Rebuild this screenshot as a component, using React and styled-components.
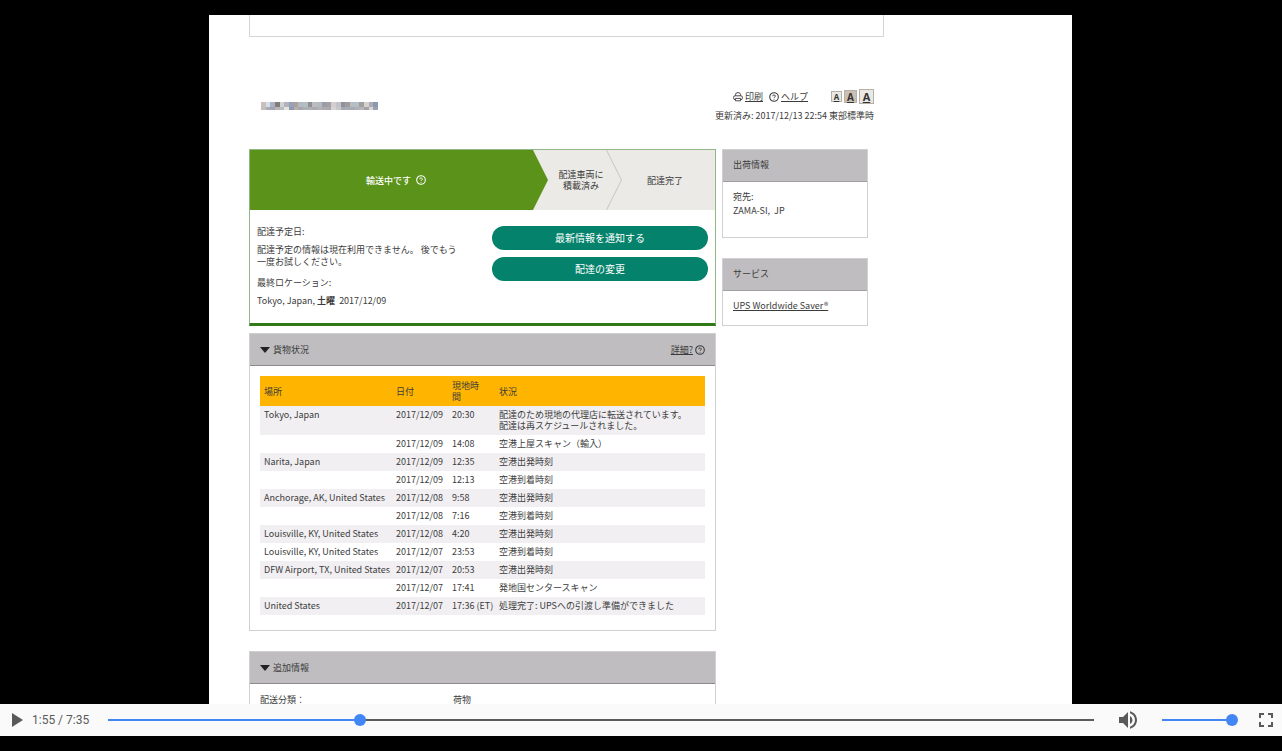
import React, { useState } from 'react';
import styled, { createGlobalStyle } from 'styled-components';
import { MdPlayArrow, MdVolumeUp, MdFullscreen } from 'react-icons/md';

const scans = [
    { place: 'Tokyo, Japan', date: '2017/12/09', time: '20:30', status: ['配達のため現地の代理店に転送されています。', '配達は再スケジュールされました。'] },
    { place: '', date: '2017/12/09', time: '14:08', status: ['空港上屋スキャン（輸入）'] },
    { place: 'Narita, Japan', date: '2017/12/09', time: '12:35', status: ['空港出発時刻'] },
    { place: '', date: '2017/12/09', time: '12:13', status: ['空港到着時刻'] },
    { place: 'Anchorage, AK, United States', date: '2017/12/08', time: '9:58', status: ['空港出発時刻'] },
    { place: '', date: '2017/12/08', time: '7:16', status: ['空港到着時刻'] },
    { place: 'Louisville, KY, United States', date: '2017/12/08', time: '4:20', status: ['空港出発時刻'] },
    { place: 'Louisville, KY, United States', date: '2017/12/07', time: '23:53', status: ['空港到着時刻'] },
    { place: 'DFW Airport, TX, United States', date: '2017/12/07', time: '20:53', status: ['空港出発時刻'] },
    { place: '', date: '2017/12/07', time: '17:41', status: ['発地国センタースキャン'] },
    { place: 'United States', date: '2017/12/07', time: '17:36 (ET)', status: ['処理完了: UPSへの引渡し準備ができました'] },
];

const mosaicTop = ['#c9c1bd', '#d3e0ea', '#a9b3c2', '#857b78', '#cdd2d4', '#b4b2b6', '#98a2b6', '#aaa19f', '#b3bac2', '#b6bec5', '#938f90', '#b9bdc2', '#b4bac0', '#9a9ca6', '#a4a2a6', '#d3cfd0', '#c4c4c8', '#8e929f', '#a39b98', '#b6bec4', '#b4c0c9', '#a29f9f', '#d5d1cd', '#a9adb5', '#8d98ad'];
const mosaicBottom = ['#c6beba', '#a9acb5', '#a3a6b2', '#b8b6b8', '#b5bcc2', '#e6e4e1', '#8f9ab2', '#b9aea9', '#a8a6ad', '#aab0b6', '#aeb0b4', '#a9abb0', '#b3b1b2', '#acacb2', '#aba9aa', '#d8d4d4', '#c9c7c8', '#a7a9b1', '#a7adb8', '#a9abb0', '#adb1b7', '#b4b6ba', '#a6a2a4', '#d9d7d5', '#98a3b5'];

const Mosaic = () => (
    <svg width="117" height="8" viewBox="0 0 25 8" preserveAspectRatio="none" shapeRendering="crispEdges">
        {mosaicTop.map((color, i) => <rect key={i} x={i} y="0" width="1" height="5" fill={color} />)}
        {mosaicBottom.map((color, i) => <rect key={i} x={i} y="5" width="1" height="3" fill={color} />)}
    </svg>
);

const Help = () => (
    <svg width="10" height="10" viewBox="0 0 10 10" fill="none" stroke="currentColor">
        <circle cx="5" cy="5" r="4.3" strokeWidth="1.1" />
        <path d="M3.7 4.2a1.3 1.2 0 1 1 1.9 1c-.4.2-.6.4-.6.8" strokeWidth="1" />
        <circle cx="5" cy="7.3" r=".5" fill="currentColor" stroke="none" />
    </svg>
);

const Printer = () => (
    <svg width="10" height="10" viewBox="0 0 10 10" fill="none" stroke="currentColor" strokeWidth="0.9">
        <path d="M2.6 3.8V2.2Q2.6.6 5 .6T7.4 2.2v1.6" />
        <rect x=".6" y="3.8" width="8.8" height="3.8" rx="1.4" />
        <path d="M2.4 6.4h5.2v2.4H2.4z" fill="#fff" />
    </svg>
);

const Arrow = () => (
    <svg width="10" height="6" viewBox="0 0 10 6">
        <path d="M0 0h10L5 6z" fill="#222" />
    </svg>
);

const App = () => {
    const [position, setPosition] = useState(116);
    const [volume, setVolume] = useState(100);

    return (
        <Screen>
            <GlobalStyle />
            <Page>
                <UpperBox />
                <TopBar>
                    <Mosaic />
                    <Tools>
                        <ToolLine>
                            <ToolLink href="#print"><Printer /><u>印刷</u></ToolLink>
                            <ToolLink href="#help"><Help /><u>ヘルプ</u></ToolLink>
                            <Sizes>
                                <SizeButton type="button" $size={11} $text={8}>A</SizeButton>
                                <SizeButton type="button" $size={13} $text={10} $active>A</SizeButton>
                                <SizeButton type="button" $size={15} $text={11}>A</SizeButton>
                            </Sizes>
                        </ToolLine>
                        <div>更新済み: 2017/12/13 22:54 東部標準時</div>
                    </Tools>
                </TopBar>
                <Columns>
                    <Main>
                        <StatusCard>
                            <Tracker>
                                <CurrentStep>輸送中です <Help /></CurrentStep>
                                <MiddleStep>配達車両に<br />積載済み</MiddleStep>
                                <Divider viewBox="0 0 16 60">
                                    <path d="M.5 0l15 30l-15 30" fill="none" stroke="#c6c5c2" />
                                </Divider>
                                <LastStep>配達完了</LastStep>
                            </Tracker>
                            <StatusBody>
                                <Delivery>
                                    <p>配達予定日:</p>
                                    <p>配達予定の情報は現在利用できません。 後でもう一度お試しください。</p>
                                    <LastPlace>最終ロケーション:</LastPlace>
                                    <p>Tokyo, Japan, <b>土曜</b>&nbsp; 2017/12/09</p>
                                </Delivery>
                                <Actions>
                                    <ActionButton type="button">最新情報を通知する</ActionButton>
                                    <ActionButton type="button">配達の変更</ActionButton>
                                </Actions>
                            </StatusBody>
                        </StatusCard>
                        <Panel>
                            <PanelHeader>
                                <PanelTitle><Arrow />貨物状況</PanelTitle>
                                <DetailLink href="#details"><u>詳細?</u><Help /></DetailLink>
                            </PanelHeader>
                            <PanelBody>
                                <ScanTable>
                                    <colgroup>
                                        <col width="132" />
                                        <col width="56" />
                                        <col width="47" />
                                        <col />
                                    </colgroup>
                                    <thead>
                                        <tr>
                                            <th>場所</th>
                                            <th>日付</th>
                                            <th>現地時<br />間</th>
                                            <th>状況</th>
                                        </tr>
                                    </thead>
                                    <tbody>
                                        {scans.map((scan, index) => (
                                            <tr key={index}>
                                                <td>{scan.place}</td>
                                                <td>{scan.date}</td>
                                                <td>{scan.time}</td>
                                                <td>{scan.status.map((line) => <div key={line}>{line}</div>)}</td>
                                            </tr>
                                        ))}
                                    </tbody>
                                </ScanTable>
                            </PanelBody>
                        </Panel>
                        <ExtraPanel>
                            <PanelHeader>
                                <PanelTitle><Arrow />追加情報</PanelTitle>
                            </PanelHeader>
                            <ExtraBody>
                                <dt>配送分類：</dt>
                                <dd>荷物</dd>
                            </ExtraBody>
                        </ExtraPanel>
                    </Main>
                    <Side>
                        <Panel>
                            <SideHeader>出荷情報</SideHeader>
                            <SideBody $bottom={19}>宛先:<br />ZAMA-SI,&nbsp; JP</SideBody>
                        </Panel>
                        <Panel>
                            <SideHeader>サービス</SideHeader>
                            <SideBody $bottom={12}><a href="#saver">UPS Worldwide Saver®</a></SideBody>
                        </Panel>
                    </Side>
                </Columns>
            </Page>
            <Controls>
                <IconButton type="button" aria-label="再生"><MdPlayArrow /></IconButton>
                <Time>1:55 / 7:35</Time>
                <Seek
                    type="range" aria-label="再生位置" min="0" max="455" value={position}
                    onChange={(e) => setPosition(Number(e.target.value))}
                    style={{ '--filled': `${(position / 455) * 100}%` }}
                />
                <IconButton type="button" aria-label="ミュート"><MdVolumeUp /></IconButton>
                <Volume
                    type="range" aria-label="音量" min="0" max="100" value={volume}
                    onChange={(e) => setVolume(Number(e.target.value))}
                    style={{ '--filled': `${volume}%` }}
                />
                <IconButton type="button" aria-label="全画面"><MdFullscreen /></IconButton>
            </Controls>
        </Screen>
    );
};

export default App;

const GlobalStyle = createGlobalStyle`
    * {
        box-sizing: border-box;
    }
    body {
        margin: 0;
        background: #000;
    }
    p, dl, dd {
        margin: 0;
    }
    button, input {
        font: inherit;
        margin: 0;
        padding: 0;
        border: 0;
    }
    svg {
        flex: none;
    }
`

const Screen = styled.div`
    display: flex;
    flex-direction: column;
    height: 100vh;
    padding: 15px 0;
    background: #000;
    color: #3c3c3c;
    font: 9px/12px "Noto Sans CJK JP", sans-serif;
`

const Page = styled.main`
    flex: 1;
    min-height: 0;
    overflow: hidden;
    margin: 0 210px 0 209px;
    padding: 0 188px 0 40px;
    background: #fff;
`

const UpperBox = styled.div`
    height: 22px;
    border: 1px solid #d5d5d5;
    border-top: 0;
`

const TopBar = styled.header`
    display: flex;
    justify-content: space-between;
    align-items: center;
    margin: 52px 10px 27px 12px;
`

const Tools = styled.div`
    text-align: right;
`

const ToolLine = styled.div`
    display: flex;
    justify-content: flex-end;
    align-items: center;
    gap: 6px;
    height: 15px;
    margin-bottom: 6px;
`

const ToolLink = styled.a`
    display: flex;
    align-items: center;
    gap: 2px;
    color: inherit;
    text-decoration: none;
`

const Sizes = styled.div`
    display: flex;
    align-items: center;
    gap: 2px;
    margin-left: 17px;
`

const SizeButton = styled.button`
    width: ${(props) => props.$size}px;
    height: ${(props) => props.$size}px;
    border: 1px solid #b5b0aa;
    background: ${(props) => (props.$active ? '#cdc0b3' : '#ebe8e3')};
    color: #333;
    font: bold ${(props) => props.$text}px/1 "Open Sans", sans-serif;
    text-decoration: underline;
`

const Columns = styled.div`
    display: flex;
    align-items: flex-start;
    gap: 6px;
    margin-right: 16px;
`

const Main = styled.div`
    flex: 1;
    min-width: 0;
`

const Side = styled.aside`
    display: flex;
    flex-direction: column;
    gap: 20px;
    width: 146px;
`

const StatusCard = styled.section`
    margin-bottom: 7px;
    border: 1px solid #8fb886;
    border-bottom: 3px solid #317a17;
`

const Tracker = styled.div`
    display: flex;
    height: 60px;
    background: #ebeae6;
    line-height: 11px;
`

const CurrentStep = styled.div`
    flex: 1;
    display: flex;
    align-items: center;
    justify-content: center;
    gap: 5px;
    padding-right: 6px;
    background: #5a921a;
    color: #fff;
    font-weight: 500;
    clip-path: polygon(0 0, calc(100% - 15px) 0, 100% 50%, calc(100% - 15px) 100%, 0 100%);
`

const Step = styled.div`
    display: flex;
    align-items: center;
    justify-content: center;
    text-align: center;
`

const MiddleStep = styled(Step)`
    width: 58px;
    padding-left: 8px;
`

const LastStep = styled(Step)`
    width: 93px;
    padding-right: 7px;
`

const Divider = styled.svg`
    width: 16px;
    height: 60px;
`

const StatusBody = styled.div`
    display: flex;
    justify-content: space-between;
    padding: 16px 7px 16px 7px;
`

const Delivery = styled.div`
    width: 208px;

    p + p {
        margin-top: 6px;
    }
`

const LastPlace = styled.p`
    padding-top: 3px;
`

const Actions = styled.div`
    display: flex;
    flex-direction: column;
    gap: 7px;
    width: 216px;
`

const ActionButton = styled.button`
    height: 24px;
    border-radius: 12px;
    background: #04826b;
    color: #fff;
    font-size: 10px;
`

const Panel = styled.section`
    border: 1px solid #d0cfd1;
`

const ExtraPanel = styled(Panel)`
    margin-top: 20px;
`

const PanelHeader = styled.div`
    display: flex;
    align-items: center;
    justify-content: space-between;
    height: 32px;
    padding: 0 10px;
    background: #bfbdc0;
    border-bottom: 1px solid #8c8a8d;
`

const PanelTitle = styled.div`
    display: flex;
    align-items: center;
    gap: 3px;
`

const DetailLink = styled.a`
    display: flex;
    align-items: center;
    gap: 2px;
    color: inherit;
    text-decoration: none;
`

const PanelBody = styled.div`
    padding: 10px 10px 15px;
`

const ExtraBody = styled.dl`
    display: grid;
    grid-template-columns: 193px 1fr;
    padding: 10px;
`

const ScanTable = styled.table`
    width: 100%;
    table-layout: fixed;
    border-collapse: collapse;
    line-height: 11px;
    white-space: nowrap;

    th {
        height: 30px;
        padding: 4px;
        background: #ffb500;
        font-weight: 400;
        text-align: left;
    }
    td {
        padding: 3px 0 4px 4px;
        vertical-align: top;
    }
    tbody tr:nth-child(odd) {
        background: #f1eff2;
    }
`

const SideHeader = styled.div`
    height: 32px;
    padding: 0 10px;
    background: #bfbdc0;
    border-bottom: 1px solid #a19fa2;
    line-height: 30px;
`

const SideBody = styled.div`
    padding: 8px 10px ${(props) => props.$bottom}px;
    line-height: 14px;

    a {
        color: inherit;
    }
`

const Controls = styled.div`
    display: flex;
    align-items: center;
    height: 32px;
    padding: 0 4px;
    background: #fafafa;
    color: #5a5a5a;
`

const IconButton = styled.button`
    width: 24px;
    height: 24px;
    background: none;
    color: inherit;
    font-size: 24px;
    line-height: 0;
`

const Time = styled.span`
    margin: 0 13px 0 4px;
    font: 12px/16px Roboto, sans-serif;
`

const Slider = styled.input`
    appearance: none;
    height: 12px;
    background: linear-gradient(to right, #4285f4 var(--filled), #5a5a5a var(--filled)) center / calc(100% - 12px) 2px no-repeat;

    &::-webkit-slider-thumb {
        appearance: none;
        width: 12px;
        height: 12px;
        border-radius: 50%;
        background: #4285f4;
    }
`

const Seek = styled(Slider)`
    flex: 1;
    min-width: 0;
    margin-right: 16px;
`

const Volume = styled(Slider)`
    width: 82px;
    margin: 0 16px;
`
